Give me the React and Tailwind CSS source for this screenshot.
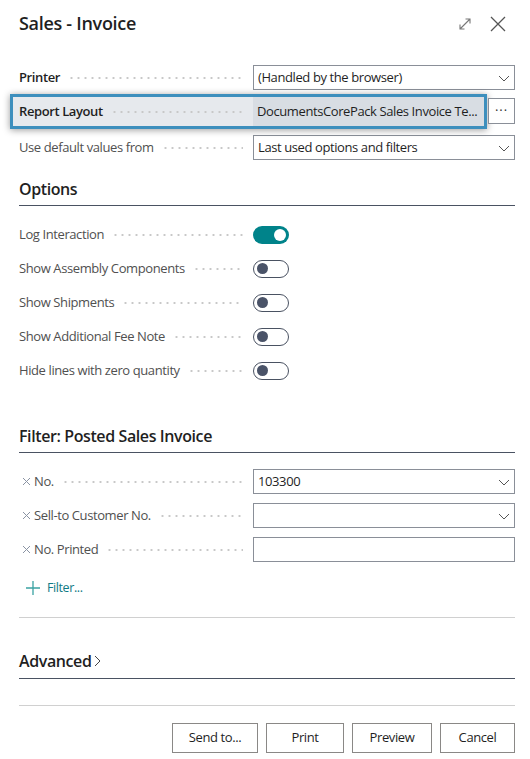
import { useState } from 'react'

const dots = 'flex-1 mx-2 h-[10px] bg-[radial-gradient(circle,#c8c8c8_0.9px,transparent_1.3px)] bg-[length:7px_10px] bg-repeat-x'

function Chevron() {
  return (
    <svg width="14" height="14" viewBox="0 0 14 14" className="shrink-0">
      <path d="M2 5l5 5 5-5" fill="none" stroke="#555" strokeWidth="1" />
    </svg>
  )
}

function Toggle({ on }) {
  return on ? (
    <div className="w-[36px] h-[18px] rounded-full bg-[#00838a] flex items-center justify-end px-[3px]">
      <div className="w-[12px] h-[12px] rounded-full bg-white" />
    </div>
  ) : (
    <div className="w-[36px] h-[18px] rounded-full border border-[#4a5262] flex items-center px-[3px]">
      <div className="w-[11px] h-[11px] rounded-full bg-[#4a5368]" />
    </div>
  )
}

function Row({ label, bold, children, x }) {
  return (
    <div className="flex items-center h-[25px]">
      <div className="w-[234px] flex items-center pr-[2px]">
        {x && (
          <svg width="9" height="9" viewBox="0 0 9 9" className="ml-[3px] mr-[3px]">
            <path d="M1 1l7 7M8 1L1 8" stroke="#8a93a3" strokeWidth="1" />
          </svg>
        )}
        <span className={bold ? 'font-semibold text-[#1f1f1f]' : 'text-[#505050]'}>{label}</span>
        <div className={dots} />
      </div>
      {children}
    </div>
  )
}

function Field({ value, chevron = true }) {
  return (
    <div className="w-[262px] h-[25px] border border-[#8a8f98] flex items-center pl-[4px] pr-[3px] text-[#1f1f1f]">
      <span className="flex-1 truncate">{value}</span>
      {chevron && <Chevron />}
    </div>
  )
}

export default function App() {
  const [toggles] = useState([
    ['Log Interaction', true],
    ['Show Assembly Components', false],
    ['Show Shipments', false],
    ['Show Additional Fee Note', false],
    ['Hide lines with zero quantity', false],
  ])

  return (
    <div className="w-[530px] h-[759px] bg-white pl-[19px] pr-[15px] text-[13px] font-['Open_Sans',sans-serif] tracking-[-0.4px] overflow-hidden">
      <div className="flex items-center h-[46px] pt-[1px]">
        <h1 className="flex-1 text-[18px] font-semibold text-[#1f1f1f] tracking-[-0.3px]">Sales - Invoice</h1>
        <svg width="16" height="16" viewBox="0 0 16 16" className="mr-[16px]">
          <path d="M3 13L13 3M8.5 3H13v4.5M3 8.5V13h4.5" fill="none" stroke="#777" strokeWidth="1.1" />
        </svg>
        <svg width="18" height="18" viewBox="0 0 18 18" className="mr-[8px]">
          <path d="M2 2l14 14M16 2L2 16" fill="none" stroke="#555" strokeWidth="1.3" />
        </svg>
      </div>

      <div className="mt-[19px]">
        <Row label="Printer" bold>
          <Field value="(Handled by the browser)" />
        </Row>
        <div className="relative mt-[4px] -ml-[9px] w-[477px] h-[35px] border-[3px] border-[#3d8fbd] bg-[#e6e9ed] shadow-[0_1px_7px_rgba(0,0,0,0.4)] flex items-center pl-[6px]">
          <div className="w-[234px] shrink-0 flex items-center">
            <span className="font-semibold text-[#1f1f1f]">Report Layout</span>
            <div className={dots} />
          </div>
          <div className="flex-1 min-w-0 h-full bg-[#d8dde3] flex items-center pl-[4px] text-[#1f1f1f] whitespace-nowrap overflow-hidden">
            DocumentsCorePack Sales Invoice Te...
          </div>
          <div className="absolute left-[475px] top-[1px] w-[27px] h-[26px] border border-[#8a8f98] bg-white flex items-center justify-center text-[#333] tracking-[1px]">
            ···
          </div>
        </div>
        <div className="mt-[6px]">
          <Row label="Use default values from">
            <Field value="Last used options and filters" />
          </Row>
        </div>
      </div>

      <h2 className="mt-[17px] text-[16px] font-semibold text-[#1f1f1f] pb-[4px] border-b border-[#4a5262]">Options</h2>
      <div className="mt-[16px] flex flex-col gap-[9px]">
        {toggles.map(([label, on]) => (
          <Row key={label} label={label}>
            <Toggle on={on} />
          </Row>
        ))}
      </div>

      <h2 className="mt-[41px] text-[16px] font-semibold text-[#1f1f1f] pb-[4px] border-b border-[#4a5262]">Filter: Posted Sales Invoice</h2>
      <div className="mt-[16px] flex flex-col gap-[9px]">
        <Row label="No." x>
          <Field value="103300" />
        </Row>
        <Row label="Sell-to Customer No." x>
          <Field value="" />
        </Row>
        <Row label="No. Printed" x>
          <Field value="" chevron={false} />
        </Row>
      </div>
      <div className="mt-[17px] flex items-center pl-[6px] text-[#0f7a85]">
        <svg width="16" height="16" viewBox="0 0 16 16" className="mr-[6px]">
          <path d="M8 1v14M1 8h14" stroke="#3aa3a3" strokeWidth="1.3" />
        </svg>
        <span className="text-[12.5px]">Filter...</span>
      </div>

      <div className="mt-[19px] border-b border-[#d0d0d0]" />

      <div className="mt-[31px] pb-[5px] border-b border-[#4a5262] flex items-center">
        <span className="text-[16px] font-semibold text-[#1f1f1f]">Advanced</span>
        <svg width="10" height="14" viewBox="0 0 10 14" className="ml-[2px]">
          <path d="M2 2l5 5-5 5" fill="none" stroke="#444" strokeWidth="1" />
        </svg>
      </div>

      <div className="mt-[26px] border-b border-[#d0d0d0]" />

      <div className="mt-[17px] flex justify-end gap-[8px]">
        {[['Send to...', 'w-[86px]'], ['Print', 'w-[78px]'], ['Preview', 'w-[80px]'], ['Cancel', 'w-[75px]']].map(([t, w]) => (
          <button key={t} className={`${w} h-[30px] border border-[#8a8886] bg-white text-[#1f1f1f]`}>
            {t}
          </button>
        ))}
      </div>
    </div>
  )
}
